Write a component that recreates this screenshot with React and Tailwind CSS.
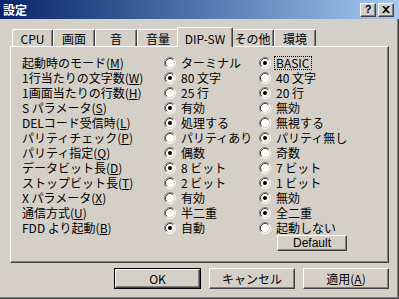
import React from "react";

const rows = [
  ["起動時のモード", "M", "ターミナル", false, "BASIC", true, true],
  ["1行当たりの文字数", "W", "80 文字", true, "40 文字", false],
  ["1画面当たりの行数", "H", "25 行", false, "20 行", true],
  ["S パラメータ", "S", "有効", true, "無効", false],
  ["DELコード受信時", "L", "処理する", true, "無視する", false],
  ["パリティチェック", "P", "パリティあり", false, "パリティ無し", true],
  ["パリティ指定", "Q", "偶数", true, "奇数", false],
  ["データビット長", "D", "8 ビット", true, "7 ビット", false],
  ["ストップビット長", "T", "2 ビット", false, "1 ビット", true],
  ["X パラメータ", "X", "有効", false, "無効", true],
  ["通信方式", "U", "半二重", false, "全二重", true],
  ["FDD より起動", "B", "自動", true, "起動しない", false],
];

function Radio({ on }) {
  return (
    <svg width="12" height="12" viewBox="0 0 12 12" className="shrink-0">
      <circle cx="6" cy="6" r="5" fill="#ffffff" />
      <path d="M2.11 9.89 A5.5 5.5 0 0 1 9.89 2.11" fill="none" stroke="#808080" strokeWidth="1" />
      <path d="M9.89 2.11 A5.5 5.5 0 0 1 2.11 9.89" fill="none" stroke="#ffffff" strokeWidth="1" />
      <path d="M2.82 9.18 A4.5 4.5 0 0 1 9.18 2.82" fill="none" stroke="#404040" strokeWidth="1" />
      <path d="M9.18 2.82 A4.5 4.5 0 0 1 2.82 9.18" fill="none" stroke="#d4d0c8" strokeWidth="1" />
      {on && <circle cx="6" cy="6" r="2" fill="#000000" />}
    </svg>
  );
}

function Option({ text, on, focus }) {
  return (
    <div className="flex items-center gap-[5px]">
      <Radio on={on} />
      <span
        className={
          focus
            ? "border border-dotted border-black px-[1px] -ml-[2px] leading-[12px]"
            : "leading-[15px]"
        }
      >
        {text}
      </span>
    </div>
  );
}

function Tab({ children, w, selected }) {
  if (selected) {
    return (
      <div
        className={`relative z-10 -mx-[2px] -mb-[1px] h-[20px] ${w} flex items-start justify-center pt-[3px] bg-[#d4d0c8] border-l border-t border-white border-r border-r-[#404040] rounded-tl-[2px] rounded-tr-[2px] shadow-[inset_-1px_0_#808080]`}
      >
        {children}
      </div>
    );
  }
  return (
    <div
      className={`h-[17px] ${w} flex items-center justify-center bg-[#d4d0c8] border-l border-t border-white border-r border-r-[#404040] rounded-tl-[2px] rounded-tr-[2px] shadow-[inset_-1px_0_#808080]`}
    >
      {children}
    </div>
  );
}

function Button({ children, w, h, isDefault }) {
  const inner = (
    <div
      className={`${isDefault ? "w-full h-full" : `${w} ${h}`} flex items-center justify-center bg-[#d4d0c8] border border-t-white border-l-white border-r-[#404040] border-b-[#404040] shadow-[inset_-1px_-1px_#808080]`}
    >
      {children}
    </div>
  );
  if (isDefault) {
    return <div className={`${w} ${h} border border-black`}>{inner}</div>;
  }
  return inner;
}

export default function App() {
  return (
    <div className="w-[399px] h-[299px] bg-[#d4d0c8] text-[12px] leading-[15px] text-black font-['Noto_Sans_CJK_JP','Liberation_Sans',sans-serif] flex flex-col overflow-hidden">
      {/* Title bar */}
      <div className="h-[19px] shrink-0 flex items-center justify-between pl-[3px] pr-[5px] bg-gradient-to-r from-[#0a246a] to-[#a6caf0]">
        <span className="text-white font-bold text-[12px] leading-[14px]">設定</span>
        <div className="flex items-center gap-[2px]">
          <div className="w-[16px] h-[14px] flex items-center justify-center bg-[#d4d0c8] border border-t-white border-l-white border-r-[#404040] border-b-[#404040] shadow-[inset_-1px_-1px_#808080] font-['Liberation_Sans',sans-serif] font-bold text-[11px] leading-[11px]">
            ?
          </div>
          <div className="w-[16px] h-[14px] flex items-center justify-center bg-[#d4d0c8] border border-t-white border-l-white border-r-[#404040] border-b-[#404040] shadow-[inset_-1px_-1px_#808080]">
            <svg width="8" height="7" viewBox="0 0 8 7">
              <path d="M0 0h2l2 2 2-2h2L5 3.5 8 7H6L4 5 2 7H0l3-3.5z" fill="#000" />
            </svg>
          </div>
        </div>
      </div>

      {/* Body */}
      <div className="flex-1 flex flex-col pl-[10px] shadow-[inset_-1px_-1px_#404040,inset_-2px_-2px_#808080]">
        {/* Tabs */}
        <div className="mt-[8px] h-[19px] flex items-end pl-[2px]">
          <Tab w="w-[41px]">CPU</Tab>
          <Tab w="w-[42px]">画面</Tab>
          <Tab w="w-[42px]">音</Tab>
          <Tab w="w-[42px]">音量</Tab>
          <Tab w="w-[56px]" selected>DIP-SW</Tab>
          <Tab w="w-[43px]">その他</Tab>
          <Tab w="w-[42px]">環境</Tab>
        </div>

        {/* Panel */}
        <div className="w-[379px] h-[217px] flex flex-col pt-[8px] px-[11px] border-t border-l border-white border-r border-b border-r-[#404040] border-b-[#404040] shadow-[inset_-1px_-1px_#808080]">
          {rows.map(([label, key, a, aOn, b, bOn, focus]) => (
            <div key={label} className="h-[15px] flex items-center">
              <div className="w-[142px] shrink-0 whitespace-nowrap">
                {label}(<span className="underline underline-offset-[1px]">{key}</span>)
              </div>
              <div className="w-[95px] shrink-0">
                <Option text={a} on={aOn} />
              </div>
              <div>
                <Option text={b} on={bOn} focus={focus} />
              </div>
            </div>
          ))}
          <div className="flex">
            <div className="w-[255px] shrink-0" />
            <Button w="w-[70px]" h="h-[16px]">
              <span className="font-['Liberation_Sans',sans-serif] text-[12px] leading-[12px]">Default</span>
            </Button>
          </div>
        </div>

        {/* Bottom buttons */}
        <div className="mt-[5px] w-[379px] flex justify-end gap-[8px]">
          <Button w="w-[87px]" h="h-[21px]" isDefault>
            OK
          </Button>
          <Button w="w-[86px]" h="h-[21px]">キャンセル</Button>
          <Button w="w-[86px]" h="h-[21px]">
            <span>
              適用(<span className="underline underline-offset-[1px]">A</span>)
            </span>
          </Button>
        </div>
      </div>
    </div>
  );
}
